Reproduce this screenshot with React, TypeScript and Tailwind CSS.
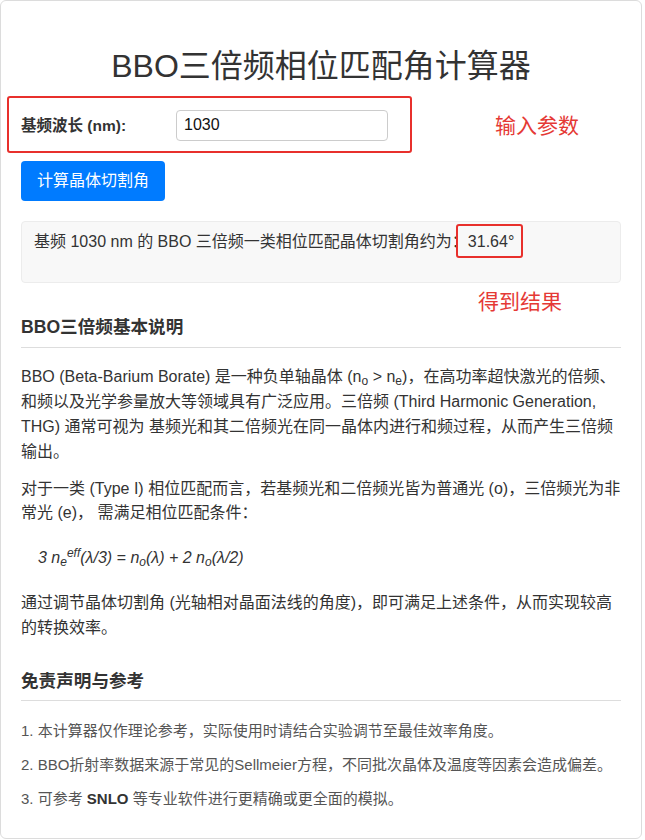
import React from "react";

const font = { fontFamily: '"Liberation Sans", Arial, "Noto Sans CJK SC", sans-serif' };

export default function App() {
  return (
    <div className="bg-white w-[645px] h-[840px]" style={font}>
      <div className="relative w-[642px] h-[839px] border border-[#dcdcdc] rounded-md bg-white px-5 text-[#333]">
        <h1 className="pt-[46px] text-[32px] leading-[1.2] text-center font-normal text-[#333]">
          BBO三倍频相位匹配角计算器
        </h1>

        <div className="mt-[25px] flex items-center h-[30px]">
          <label className="w-[155px] text-[15.5px] font-bold text-[#333]">基频波长 (nm):</label>
          <input
            defaultValue="1030"
            className="w-[212px] h-[31px] border border-[#ccc] rounded px-[7px] text-[16px] text-[#111] bg-white outline-none"
            style={font}
          />
        </div>

        <button className="mt-[21px] h-10 px-4 bg-[#007bff] text-white rounded text-[16px] leading-none">
          计算晶体切割角
        </button>

        <div className="mt-5 h-[62px] bg-[#f8f8f8] border border-[#ececec] rounded px-3 pt-2 text-[16px] leading-[24px] text-[#333]">
          基频 1030 nm 的 BBO 三倍频一类相位匹配晶体切割角约为：31.64°
        </div>

        <h2 className="mt-[31px] text-[17.6px] leading-[27px] font-bold text-[#333] pb-[6px] border-b border-[#ddd]">
          BBO三倍频基本说明
        </h2>

        <p className="mt-[17px] text-[16px] leading-[24.8px] text-[#333]">
          BBO (Beta-Barium Borate) 是一种负单轴晶体 (n<sub>o</sub> &gt; n<sub>e</sub>)，在高功率超快激光的倍频、和频以及光学参量放大等领域具有广泛应用。三倍频 (Third Harmonic Generation, THG) 通常可视为 基频光和其二倍频光在同一晶体内进行和频过程，从而产生三倍频输出。
        </p>
        <p className="mt-3 text-[16px] leading-[24.8px] text-[#333]">
          对于一类 (Type I) 相位匹配而言，若基频光和二倍频光皆为普通光 (o)，三倍频光为非常光 (e)， 需满足相位匹配条件：
        </p>
        <p className="mt-5 pl-[17px] text-[16px] leading-[24.8px] italic text-[#333]">
          3 n<sub>e</sub><sup>eff</sup>(λ/3) = n<sub>o</sub>(λ) + 2 n<sub>o</sub>(λ/2)
        </p>
        <p className="mt-5 text-[16px] leading-[24.8px] text-[#333]">
          通过调节晶体切割角 (光轴相对晶面法线的角度)，即可满足上述条件，从而实现较高的转换效率。
        </p>

        <h2 className="mt-[27px] text-[17.6px] leading-[27px] font-bold text-[#333] pb-[5px] border-b border-[#ddd]">
          免责声明与参考
        </h2>

        <div className="mt-[18px] text-[15px] leading-[24px] text-[#555]">
          <p>1. 本计算器仅作理论参考，实际使用时请结合实验调节至最佳效率角度。</p>
          <p className="mt-[10px]">2. BBO折射率数据来源于常见的Sellmeier方程，不同批次晶体及温度等因素会造成偏差。</p>
          <p className="mt-[10px]">
            3. 可参考 <b className="font-bold text-[#333]">SNLO</b> 等专业软件进行更精确或更全面的模拟。
          </p>
        </div>

        {/* annotations */}
        <div className="absolute left-[6px] top-[95px] w-[405px] h-[57px] border-2 border-[#e8302c] rounded-[3px]" />
        <div className="absolute left-[494px] top-[113px] text-[21px] leading-[24px] text-[#e53935]">输入参数</div>
        <div className="absolute left-[455px] top-[223px] w-[67px] h-[34px] border-2 border-[#e8302c] rounded-[3px]" />
        <div className="absolute left-[477px] top-[289px] text-[21px] leading-[24px] text-[#e53935]">得到结果</div>
      </div>
    </div>
  );
}
